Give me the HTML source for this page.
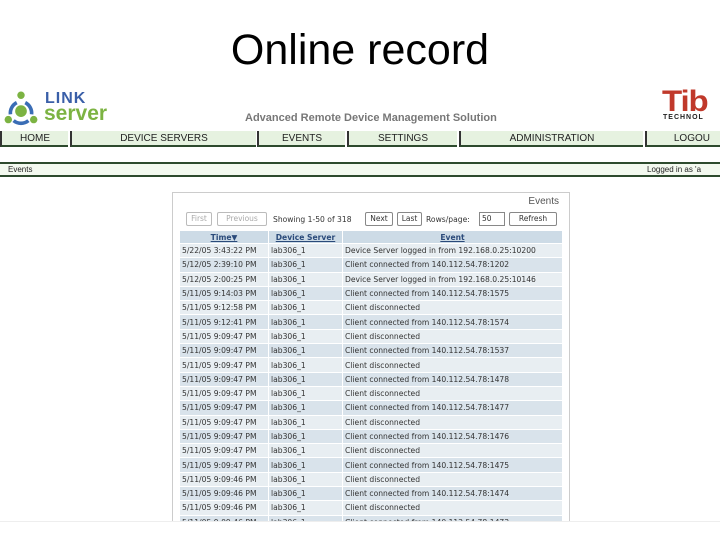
<!DOCTYPE html>
<html><head><meta charset="utf-8"><style>
*{margin:0;padding:0;box-sizing:border-box}
body{width:720px;height:540px;background:#fff;position:relative;overflow:hidden;font-family:"Liberation Sans",sans-serif}
.a{position:absolute}
h1{position:absolute;left:0;width:720px;top:26px;text-align:center;font-weight:normal;font-size:43px;color:#000}
.nav{position:absolute;top:131px;height:16px;background:#e6f2e0;border-left:2px solid #333;border-bottom:2px solid #2d4a2d;font-size:10px;text-align:center;line-height:15px;color:#222}
.bar{position:absolute;left:0;top:162px;width:720px;height:15px;border-top:2px solid #2d4a2d;border-bottom:2px solid #2d4a2d;background:#f3f9ef;font-size:8px;line-height:11px;color:#222}
.panel{position:absolute;left:172px;top:192px;width:398px;height:330px;border:1px solid #ccc;border-bottom:none;background:#fff}
table{position:absolute;left:179px;top:230px;border-collapse:separate;border-spacing:1px;font-family:"DejaVu Sans",sans-serif;font-size:7.6px;color:#333;width:384px;table-layout:fixed}
td{height:13.3px;padding:0 2px;white-space:nowrap;overflow:hidden}
th{height:12px;background:#cddbe6;color:#2a4a7a;text-decoration:underline;font-size:7.6px}
tr:nth-child(odd) td{background:#d9e3eb}
tr:nth-child(even) td{background:#e8eef2}
.btn{position:absolute;top:212px;height:14px;border:1px solid #888;border-radius:2px;font-family:"DejaVu Sans",sans-serif;font-size:7.5px;text-align:center;line-height:12px;color:#333;background:#fff}
</style></head><body>
<h1>Online record</h1>
<svg class="a" style="left:4px;top:91px" width="34" height="36" viewBox="0 0 32 34">
<circle cx="16" cy="4" r="3.5" fill="#7cb342"/>
<path d="M6 22 A11 11 0 0 1 12 11" stroke="#3a6db5" stroke-width="3.4" fill="none"/>
<path d="M20 11 A11 11 0 0 1 26 22" stroke="#3a6db5" stroke-width="3.4" fill="none"/>
<path d="M9 28 A11 11 0 0 0 23 28" stroke="#3a6db5" stroke-width="3.4" fill="none"/>
<circle cx="16" cy="19" r="5.5" fill="#7cb342"/>
<circle cx="4" cy="27" r="3.5" fill="#7cb342"/>
<circle cx="28" cy="27" r="3.5" fill="#7cb342"/>
</svg>
<div class="a" style="left:45px;top:92px;font-size:16px;font-weight:bold;color:#3a5fa8;line-height:14px;letter-spacing:1px">LINK</div>
<div class="a" style="left:44px;top:104px;font-size:21px;font-weight:bold;color:#7cb342;line-height:20px">server</div>
<div class="a" style="left:245px;top:112px;font-size:11px;font-weight:bold;color:#777">Advanced Remote Device Management Solution</div>
<div class="a" style="left:662px;top:89px;font-size:30px;font-weight:bold;color:#c0392b;line-height:26px;letter-spacing:-1px;transform:scaleX(1.1);transform-origin:left">Tib</div>
<div class="a" style="left:663px;top:114px;font-size:7px;font-weight:bold;color:#222;letter-spacing:1px">TECHNOL</div>
<div class="nav" style="left:0;width:68px">HOME</div>
<div class="nav" style="left:70px;width:186px">DEVICE SERVERS</div>
<div class="nav" style="left:257px;width:88px">EVENTS</div>
<div class="nav" style="left:347px;width:110px">SETTINGS</div>
<div class="nav" style="left:459px;width:184px">ADMINISTRATION</div>
<div class="nav" style="left:645px;width:75px;text-align:right;padding-right:10px">LOGOU</div>
<div class="bar"><span style="position:absolute;left:8px">Events</span><span style="position:absolute;left:647px">Logged in as 'a</span></div>
<div class="panel"><div class="a" style="right:10px;top:3px;font-size:10px;color:#555">Events</div></div>
<div class="btn" style="left:186px;width:26px;color:#aaa;border-color:#bbb">First</div>
<div class="btn" style="left:217px;width:50px;color:#aaa;border-color:#bbb">Previous</div>
<div class="a" style="left:273px;top:215px;font-family:'DejaVu Sans',sans-serif;font-size:7.6px;color:#333">Showing 1-50 of 318</div>
<div class="btn" style="left:365px;width:28px">Next</div>
<div class="btn" style="left:397px;width:25px">Last</div>
<div class="a" style="left:426px;top:215px;font-family:'DejaVu Sans',sans-serif;font-size:7.6px;color:#333">Rows/page:</div>
<div class="btn" style="left:479px;width:26px;text-align:left;padding-left:2px;border-radius:0">50</div>
<div class="btn" style="left:509px;width:48px">Refresh</div>
<table>
<tr><th style="width:88px">Time▼</th><th style="width:73px">Device Server</th><th>Event</th></tr>
<tr><td>5/22/05 3:43:22 PM</td><td>lab306_1</td><td>Device Server logged in from 192.168.0.25:10200</td></tr>
<tr><td>5/12/05 2:39:10 PM</td><td>lab306_1</td><td>Client connected from 140.112.54.78:1202</td></tr>
<tr><td>5/12/05 2:00:25 PM</td><td>lab306_1</td><td>Device Server logged in from 192.168.0.25:10146</td></tr>
<tr><td>5/11/05 9:14:03 PM</td><td>lab306_1</td><td>Client connected from 140.112.54.78:1575</td></tr>
<tr><td>5/11/05 9:12:58 PM</td><td>lab306_1</td><td>Client disconnected</td></tr>
<tr><td>5/11/05 9:12:41 PM</td><td>lab306_1</td><td>Client connected from 140.112.54.78:1574</td></tr>
<tr><td>5/11/05 9:09:47 PM</td><td>lab306_1</td><td>Client disconnected</td></tr>
<tr><td>5/11/05 9:09:47 PM</td><td>lab306_1</td><td>Client connected from 140.112.54.78:1537</td></tr>
<tr><td>5/11/05 9:09:47 PM</td><td>lab306_1</td><td>Client disconnected</td></tr>
<tr><td>5/11/05 9:09:47 PM</td><td>lab306_1</td><td>Client connected from 140.112.54.78:1478</td></tr>
<tr><td>5/11/05 9:09:47 PM</td><td>lab306_1</td><td>Client disconnected</td></tr>
<tr><td>5/11/05 9:09:47 PM</td><td>lab306_1</td><td>Client connected from 140.112.54.78:1477</td></tr>
<tr><td>5/11/05 9:09:47 PM</td><td>lab306_1</td><td>Client disconnected</td></tr>
<tr><td>5/11/05 9:09:47 PM</td><td>lab306_1</td><td>Client connected from 140.112.54.78:1476</td></tr>
<tr><td>5/11/05 9:09:47 PM</td><td>lab306_1</td><td>Client disconnected</td></tr>
<tr><td>5/11/05 9:09:47 PM</td><td>lab306_1</td><td>Client connected from 140.112.54.78:1475</td></tr>
<tr><td>5/11/05 9:09:46 PM</td><td>lab306_1</td><td>Client disconnected</td></tr>
<tr><td>5/11/05 9:09:46 PM</td><td>lab306_1</td><td>Client connected from 140.112.54.78:1474</td></tr>
<tr><td>5/11/05 9:09:46 PM</td><td>lab306_1</td><td>Client disconnected</td></tr>
<tr><td>5/11/05 9:09:46 PM</td><td>lab306_1</td><td>Client connected from 140.112.54.78:1473</td></tr>
</table>
<div class="a" style="left:0;top:521px;width:720px;height:19px;background:#fff;border-top:1px solid #eee"></div>
</body></html>
